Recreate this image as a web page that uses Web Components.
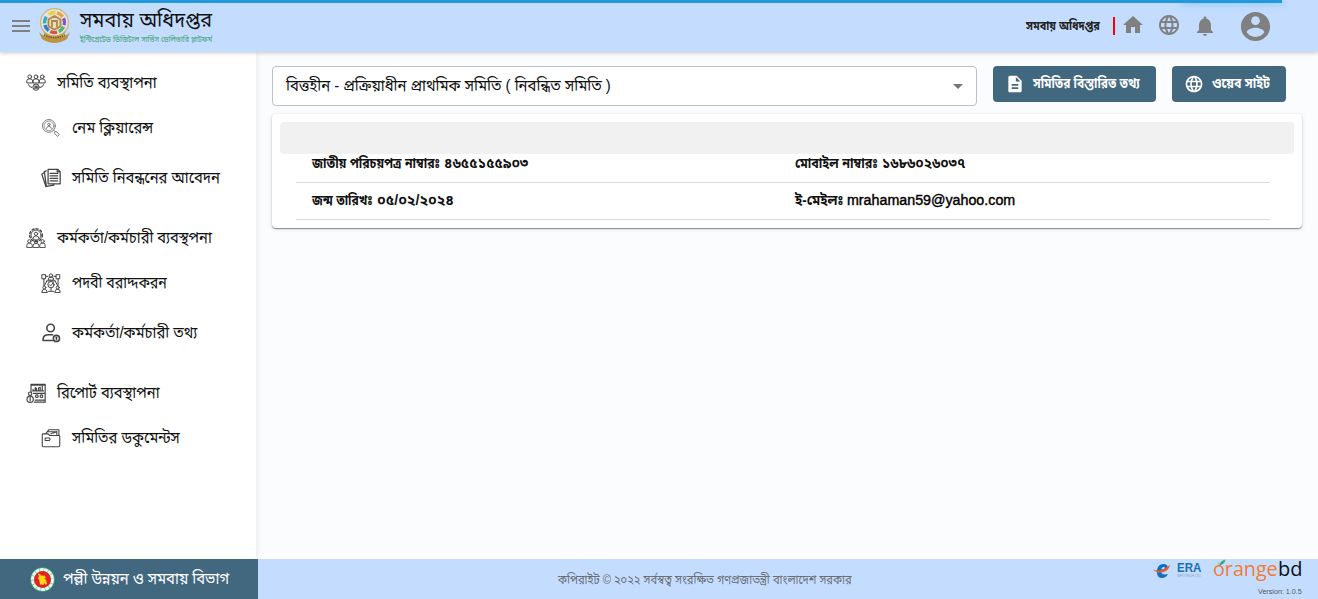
<!DOCTYPE html>
<html lang="bn">
<head>
<meta charset="utf-8">
<title>সমবায় অধিদপ্তর</title>
<style>
body{margin:0;font-family:"Liberation Sans","Noto Sans Bengali","Noto Sans",sans-serif}
</style>
</head>
<body>
<app-shell></app-shell>
<script>
const define = (name, html, init) => customElements.define(name, class extends HTMLElement {
  connectedCallback() {
    if (this.shadowRoot) return;
    const t = document.createElement('template');
    t.innerHTML = html;
    this.attachShadow({mode: 'open'}).append(t.content.cloneNode(true));
    if (init) init.call(this, this.shadowRoot);
  }
});

/* One line of text, scaled horizontally to the width it is given. */
define('fit-text', `<style>
  :host{display:block;white-space:nowrap;flex:none}
  span{display:inline-block;transform-origin:0 50%}
</style><span><slot></slot></span>`, function (root) {
  const span = root.querySelector('span');
  const w = +this.getAttribute('w');
  this.style.fontSize = (this.getAttribute('size') || 16) + 'px';
  this.style.width = w + 'px';
  const natural = span.offsetWidth;
  if (natural) span.style.transform = 'scaleX(' + w / natural + ')';
});

const S = 'fill="none" stroke="currentColor" stroke-linecap="round" stroke-linejoin="round"';
const ICONS = {
  home: '<path fill="currentColor" d="M10 20v-6h4v6h5v-8h3L12 3 2 12h3v8z"/>',
  globe: '<path fill="currentColor" d="M11.99 2C6.47 2 2 6.48 2 12s4.47 10 9.99 10C17.52 22 22 17.52 22 12S17.52 2 11.99 2zm6.93 6h-2.95c-.32-1.25-.78-2.45-1.38-3.56 1.84.63 3.37 1.91 4.33 3.56zM12 4.04c.83 1.2 1.48 2.53 1.91 3.96h-3.82c.43-1.43 1.08-2.76 1.91-3.96zM4.26 14C4.1 13.36 4 12.69 4 12s.1-1.36.26-2h3.38c-.08.66-.14 1.32-.14 2s.06 1.34.14 2H4.26zm.82 2h2.95c.32 1.25.78 2.45 1.38 3.56-1.84-.63-3.37-1.9-4.33-3.56zm2.95-8H5.08c.96-1.66 2.49-2.93 4.33-3.56C8.81 5.55 8.35 6.75 8.03 8zM12 19.96c-.83-1.2-1.48-2.53-1.91-3.96h3.82c-.43 1.43-1.08 2.76-1.91 3.96zM14.34 14H9.66c-.09-.66-.16-1.32-.16-2s.07-1.35.16-2h4.68c.09.65.16 1.32.16 2s-.07 1.34-.16 2zm.25 5.56c.6-1.11 1.06-2.31 1.38-3.56h2.95c-.96 1.65-2.49 2.93-4.33 3.56zM16.36 14c.08-.66.14-1.32.14-2s-.06-1.34-.14-2h3.38c.16.64.26 1.31.26 2s-.1 1.36-.26 2h-3.38z"/>',
  bell: '<path fill="currentColor" d="M12 22c1.1 0 2-.9 2-2h-4c0 1.1.89 2 2 2zm6-6v-5c0-3.07-1.64-5.64-4.5-6.32V4c0-.83-.67-1.5-1.5-1.5s-1.5.67-1.5 1.5v.68C7.63 5.36 6 7.92 6 11v5l-2 2v1h16v-1l-2-2z"/>',
  account: '<path fill="currentColor" d="M12 2C6.48 2 2 6.48 2 12s4.48 10 10 10 10-4.48 10-10S17.52 2 12 2zm0 3c1.66 0 3 1.34 3 3s-1.34 3-3 3-3-1.34-3-3 1.34-3 3-3zm0 14.2c-2.5 0-4.71-1.28-6-3.22.03-1.99 4-3.08 6-3.08 1.99 0 5.97 1.09 6 3.08-1.29 1.94-3.5 3.22-6 3.22z"/>',
  doc: '<path fill="currentColor" d="M14 2H6c-1.1 0-1.99.9-1.99 2L4 20c0 1.1.89 2 1.99 2H18c1.1 0 2-.9 2-2V8l-6-6zm2 16H8v-2h8v2zm0-4H8v-2h8v2zm-3-5V3.500L18.500 9H13z"/>',
  caret: '<path fill="currentColor" d="M7 10l5 5 5-5z"/>',
  menu: '<path fill="currentColor" d="M3 18h18v-2H3v2zm0-5h18v-2H3v2zm0-7v2h18V6H3z"/>',
  team: `<g ${S} stroke-width="1.200"><circle cx="4.500" cy="4.500" r="2.200"/><circle cx="12" cy="4.500" r="2.200"/><circle cx="19.500" cy="4.500" r="2.200"/><path d="M1 11.500V9.500q0-2.500 3.500-2.500T8 9.500v2zM8.500 11.500v-2q0-2.500 3.500-2.500t3.500 2.500v2zM16 11.500v-2q0-2.500 3.500-2.500T23 9.500v2zM3 14q.5 3 4 3.500M21 14q-.5 3-4 3.500"/><circle cx="12" cy="17" r="3.800"/><circle cx="12" cy="17" r="1.500"/><path d="M9.500 15l5 4M14.500 15l-5 4" stroke-width=".8"/></g>`,
  search: `<g ${S} stroke-width="1.200"><circle cx="9.500" cy="9.500" r="7.700"/><circle cx="9.500" cy="9.500" r="5.800" stroke-width=".9"/><circle cx="9.500" cy="7.800" r="1.500"/><path d="M6.500 12.500q.5-2.500 3-2.500t3 2.500M15 14.500l1.500 1.500M16 17.500l2-1.700 4 4.200-1.800 1.800z"/></g>`,
  papers: `<g ${S} stroke-width="1.500"><path d="M8.500 1.500h11.500l3 3V19H8.500zM19.500 1.500v3h3M11 6.500h9M11 9.500h9M11 12.500h9M11 15.500h9M6.500 3.500l-2.500.8L6.500 22l9-1.500M4 5.500L1 7.500l5 15"/></g>`,
  gearteam: `<g ${S} stroke-width="1.100"><circle cx="12" cy="8.500" r="6"/><circle cx="12" cy="8.500" r="7.600" stroke-width="1.700" stroke-dasharray="2.500 2.500"/><circle cx="12" cy="7" r="2"/><path d="M8.500 12.500q0-3 3.500-3t3.500 3"/><circle cx="4" cy="16" r="2"/><circle cx="12" cy="16.500" r="2"/><circle cx="20" cy="16" r="2"/><path d="M1 23v-2.500q0-2.500 3-2.500t3.500 2.500V23zM8.500 23v-2q0-2.500 3.500-2.500t3.500 2.500v2zM16.500 23v-2.500q.500-2.500 3.500-2.500t3 2.500V23z"/></g>`,
  assign: `<g ${S} stroke-width="1.200"><circle cx="12" cy="3" r="2"/><path d="M8.500 8q0-3 3.500-3t3.500 3zM1.500 2h4v5h-4zM18.500 2h4v5h-4zM6 4h2.500M15.500 4H18M3.500 7v8M20.500 7v8M7 9.500h10M7 9.500l-3 6M17 9.500l3 6"/><circle cx="12" cy="14" r="3.800"/><path d="M10 14l1.500 1.500L14.500 12"/><circle cx="4" cy="17.500" r="1.800"/><circle cx="20" cy="17.500" r="1.800"/><path d="M1 23q0-3.500 3-3.500T7.500 23zM16.500 23q0-3.500 3.500-3.500t3 3.500zM12 18v3M9 22h6"/></g>`,
  person: `<g ${S} stroke-width="1.900"><circle cx="11.500" cy="6" r="4.500"/><path d="M13.500 21H2.500v-1q0-6 6.500-6h5"/><circle cx="18.500" cy="18.500" r="3.700"/><path d="M18.500 17v3"/></g>`,
  report: `<g ${S} stroke-width="1.400"><path d="M6 11V1.500h17V23H10M7 2.500h15M8.500 9V7.500M11 9V5.500l1.500 1V9M15 9V6l2-1v4M19.500 9V4M8 9.500h13M9 12.500h13M11 20.500h11"/><circle cx="13" cy="15.800" r="1.600"/><circle cx="18.500" cy="15.800" r="1.600"/><circle cx="5" cy="12.800" r="2"/><circle cx="5" cy="19.500" r="3.800"/><path d="M5 17.500v4"/></g>`,
  folder: `<g ${S} stroke-width="1.300"><path d="M1.500 21V8q0-1 1-1h6l2 2h11q1 0 1 1v11q0 1.500-1.500 1.500h-18q-1.500 0-1.500-1.500zM6 6.500L9.500 2h12v7M9 4.500h10M12 7l7-2.500M19 4v4M5 12h5l1 1.500L10 15H5z"/></g>`
};
define('ui-icon', '<style>:host{display:block;flex:none}svg{display:block;width:100%;height:100%}</style><svg viewBox="0 0 24 24"></svg>', function (root) {
  const s = this.getAttribute('size') || 24;
  this.style.width = this.style.height = s + 'px';
  root.querySelector('svg').innerHTML = ICONS[this.getAttribute('name')];
});

define('coop-emblem', `<style>:host{display:block;flex:none;width:32px;height:36px}svg{display:block}</style>
<svg width="32" height="36" viewBox="0 0 32 36">
  <circle cx="15.500" cy="14.500" r="14" fill="#dfe4e6" stroke="#cdb780" stroke-width="1.300"/>
  <g fill="none" stroke-width="3.400" stroke-dasharray="7 55.830">
    <circle cx="15.500" cy="14.500" r="10" stroke="#f0a02e" transform="rotate(-75 15.500 14.500)"/>
    <circle cx="15.500" cy="14.500" r="10" stroke="#e8cf3e" transform="rotate(-125 15.500 14.500)"/>
    <circle cx="15.500" cy="14.500" r="10" stroke="#35a9c4" transform="rotate(175 15.500 14.500)"/>
    <circle cx="15.500" cy="14.500" r="10" stroke="#2d80cf" transform="rotate(125 15.500 14.500)"/>
    <circle cx="15.500" cy="14.500" r="10" stroke="#e0503f" transform="rotate(75 15.500 14.500)"/>
    <circle cx="15.500" cy="14.500" r="10" stroke="#55b56d" transform="rotate(25 15.500 14.500)"/>
    <circle cx="15.500" cy="14.500" r="10" stroke="#8c4fc0" transform="rotate(-25 15.500 14.500)"/>
  </g>
  <circle cx="15.500" cy="14.500" r="8" fill="#e5dccb"/>
  <path d="M9.500 11.500l6-3.500 6 3.500v7l-6 3-6-3zM13 19v-6h5v6" fill="none" stroke="#ad8744" stroke-width="1.800"/>
  <path d="M0 24q4 4.500 8.500 4.500h14Q27 28.500 31 24l-3 7q-12.500 8-25 0z" fill="#bd943e"/>
  <path d="M4 22.500q11.500 10 23 0l-2 4.500q-9.500 6-19 0z" fill="#c9a24c"/>
  <path d="M5 27q10.500 5 21 0" fill="none" stroke="#6d5426" stroke-width="1.500" stroke-dasharray="1.500 .8"/>
</svg>`);

define('gov-seal', `<style>:host{display:block;flex:none;width:25px;height:25px}svg{display:block}</style>
<svg width="25" height="25" viewBox="0 0 25 25">
  <circle cx="12.500" cy="12.500" r="12.200" fill="#3fa878"/><circle cx="12.500" cy="12.500" r="10" fill="none" stroke="#eef6ef" stroke-width="3" stroke-dasharray="4 .4"/>
  <circle cx="12.500" cy="12.500" r="8.300" fill="#ee1c25"/>
  <path d="M8 6.500l2 .5 1 1.500 4 .2.800 1.800-1.500 1.500 1.800.5.900 4.500-1.500 1-1-2-1 1.800-3.500-.3L9.300 13 8 11.500l.8-2z" fill="#fbd916"/>
</svg>`);

define('loading-bar', `<style>:host{display:block;width:1282px;height:3px;background:#2299dd;position:absolute;left:0;top:0;z-index:3}i{position:absolute;right:0;top:0;width:100px;height:3px;box-shadow:0 0 10px #29d,0 0 5px #29d;opacity:.35}</style><i></i>`);

define('app-header', `<style>
  :host{display:flex;height:52px;background:#c4ddff;align-items:center;box-shadow:0 1px 4px rgba(0,0,0,.22);position:relative;z-index:2;box-sizing:border-box;padding:0 45px 0 9px;color:#808080}
  .menu{margin-right:6px}
  .brand{display:flex;flex-direction:column;margin-left:9px;height:36px;flex:1}
  .name{color:#111;line-height:24px;height:26px}
  .sub{color:#3d9d70;line-height:12px;height:12px}
  .office{color:#222;font-weight:700;line-height:20px;margin-right:13px}
  .rule{width:2px;height:18px;background:red;margin-right:6px}
  .i{margin:-2px 12px 0 0}
  .acc{margin-left:9px}
</style>
<loading-bar></loading-bar>
<ui-icon class="menu" name="menu"></ui-icon><coop-emblem></coop-emblem>
<div class="brand"><fit-text class="name" size="21" w="132">সমবায় অধিদপ্তর</fit-text><fit-text class="sub" size="8" w="132">ইন্টিগ্রেটেড ডিজিটাল সার্ভিস ডেলিভারি প্লাটফর্ম</fit-text></div>
<fit-text class="office" size="12" w="74">সমবায় অধিদপ্তর</fit-text><div class="rule"></div>
<ui-icon class="i" name="home"></ui-icon><ui-icon class="i" name="globe"></ui-icon><ui-icon class="i" name="bell" style="margin-top:0"></ui-icon><ui-icon class="acc" name="account" size="35"></ui-icon>`);

define('nav-group', `<style>:host{display:block;margin-bottom:15px}</style><slot></slot>`);
define('nav-row', `<style>
  :host{display:flex;align-items:center;height:50px;padding-left:41px;color:#444}
  :host([top]){height:40px;padding-left:26px}
  .t{margin:2px 0 0 11px;line-height:24px;color:#111}
  .ic{margin-top:2px}
</style><div id="row" style="display:contents"></div>`, function (root) {
  root.getElementById('row').innerHTML =
    `<ui-icon class="ic" size="20" name="${this.getAttribute('icon')}"></ui-icon><fit-text class="t" size="16" w="${this.getAttribute('w')}">${this.getAttribute('label')}</fit-text>`;
  if (this.hasAttribute('dim')) root.querySelector('.ic').style.opacity = .7;
});

define('side-nav', `<style>:host{display:block;box-sizing:border-box;width:256px;height:507px;padding-top:10px;background:#fff;box-shadow:1px 0 6px rgba(0,0,0,.08)}</style>
<nav-group><nav-row top icon="team" w="100" label="সমিতি ব্যবস্থাপনা"></nav-row><nav-row dim icon="search" w="81" label="নেম ক্লিয়ারেন্স"></nav-row><nav-row icon="papers" w="148" label="সমিতি নিবন্ধনের আবেদন"></nav-row></nav-group>
<nav-group><nav-row top icon="gearteam" w="155" label="কর্মকর্তা/কর্মচারী ব্যবস্থপনা"></nav-row><nav-row icon="assign" w="95" label="পদবী বরাদ্দকরন"></nav-row><nav-row icon="person" w="125" label="কর্মকর্তা/কর্মচারী তথ্য"></nav-row></nav-group>
<nav-group><nav-row top icon="report" w="103" label="রিপোর্ট ব্যবস্থাপনা"></nav-row><nav-row icon="folder" w="108" label="সমিতির ডকুমেন্টস"></nav-row></nav-group>`);

define('select-field', `<style>:host{display:flex;box-sizing:border-box;width:705px;height:40px;border:1px solid #bfc0c2;border-radius:4px;background:#fff;align-items:center;justify-content:space-between;padding:0 6px 0 13px;color:#757575}
.t{color:#111;line-height:24px}</style>
<fit-text class="t" size="16" w="325">বিত্তহীন - প্রক্রিয়াধীন প্রাথমিক সমিতি ( নিবন্ধিত সমিতি )</fit-text><ui-icon name="caret"></ui-icon>`);

define('action-button', `<style>:host{display:flex;box-sizing:border-box;height:36px;border-radius:4px;background:#42687f;color:#fff;align-items:center;padding-left:12px;font-weight:700}
::slotted(fit-text){line-height:22px;margin:-3px 0 0 8px}</style><slot></slot>`);

define('info-cell', `<style>:host{display:flex;gap:4px;box-sizing:border-box;height:37px;border-bottom:1px solid #dcdcdc;padding:7px 0 0 16px;font-weight:700;color:#111;line-height:20px}</style><slot></slot>`);

define('info-card', `<style>
  :host{display:block;box-sizing:border-box;width:1030px;height:114px;background:#fff;border-radius:4px;padding:8px;box-shadow:0 1px 1px rgba(0,0,0,.4),0 1px 4px rgba(0,0,0,.14)}
  .band{height:32px;background:#f1f1f1;border-radius:4px}
  .grid{display:grid;grid-template-columns:483px 491px;margin:-8px 0 0 16px}
  .mail{font-weight:400;color:#000;-webkit-text-stroke:.4px #000}
</style>
<div class="band"></div><div class="grid">
<info-cell><fit-text size="14" w="128">জাতীয় পরিচয়পত্র নাম্বারঃ</fit-text><fit-text size="14" w="84">৪৬৫৫১৫৫৯০৩</fit-text></info-cell>
<info-cell><fit-text size="14" w="83">মোবাইল নাম্বারঃ</fit-text><fit-text size="14" w="83">১৬৮৬০২৬০৩৭</fit-text></info-cell>
<info-cell><fit-text size="14" w="61">জন্ম তারিখঃ</fit-text><fit-text size="14" w="77">০৫/০২/২০২৪</fit-text></info-cell>
<info-cell><fit-text size="14" w="48">ই-মেইলঃ</fit-text><fit-text class="mail" size="14" w="168">mrahaman59@yahoo.com</fit-text></info-cell>
</div>`);

define('era-logo', `<style>:host{display:flex;align-items:center;gap:6px;height:22px}.w{display:flex;flex-direction:column}.e{color:#176fb4;font-weight:700;line-height:13px;height:12px}.s{color:#8a9cb0;line-height:5px;height:6px}svg{display:block}</style>
<svg width="18" height="17" viewBox="0 0 18 17"><path d="M4 10Q4 2 10.500 2q5 0 4 4.500Q13.500 9 8 9.500q.5 4 7 2.500-2 4-6 4-5 0-5-6z" fill="#1470bd"/><path d="M8 7.500q1-3 3-2.500t0 2z" fill="#c4ddff"/><path d="M0 7.500q5 2 9 .5 4-2 8-5-1 5-6 7Q4 12 0 7.500z" fill="#f05a28"/></svg>
<div class="w"><fit-text class="e" size="13" w="24">ERA</fit-text><fit-text class="s" size="4" w="24">INFOTECH LTD</fit-text></div>`);

define('orange-logo', `<style>:host{display:flex;height:20px;font-family:"Open Sans",sans-serif}.o{color:#f47b30;line-height:20px}.b{color:#111;line-height:20px}.leaf{position:absolute;left:4px;top:0}.x{position:relative;display:flex}</style>
<div class="x"><fit-text class="o" size="20" w="65">orange</fit-text><svg class="leaf" width="9" height="7" viewBox="0 0 10 8"><path d="M3 7Q4 2 9 1 9 5 3 7zM3 7Q2 5 1 4" fill="#37a66b" stroke="#37a66b" stroke-width=".6"/></svg></div><fit-text class="b" size="20" w="24">bd</fit-text>`);

define('app-footer', `<style>
  :host{display:flex;height:40px;background:#c4ddff}
  .dept{display:flex;box-sizing:border-box;width:258px;background:#42687f;align-items:center;padding-left:30px;gap:8px;color:#fff}
  .dept fit-text{line-height:24px}
  .copy{color:#6a6e75;line-height:20px;margin:11px 0 0 300px}
  .logos{display:flex;flex-direction:column;flex:1;align-items:flex-end;margin-right:16px}
  .row{display:flex;gap:12px;height:27px}
  .ver{line-height:10px;color:#555;margin-top:1px}
</style>
<div class="dept"><gov-seal></gov-seal><fit-text size="16" w="166">পল্লী উন্নয়ন ও সমবায় বিভাগ</fit-text></div>
<fit-text class="copy" size="13" w="294">কপিরাইট © ২০২২ সর্বস্বত্ব সংরক্ষিত গণপ্রজাতন্ত্রী বাংলাদেশ সরকার</fit-text>
<div class="logos"><div class="row"><era-logo></era-logo><orange-logo></orange-logo></div><fit-text class="ver" size="7" w="44">Version: 1.0.5</fit-text></div>`);

define('app-shell', `<style>
  :host{display:flex;flex-direction:column;width:1318px;height:599px;overflow:hidden;background:#fbfcfe}
  .mid{display:flex;flex:1;min-height:0}
  main{padding:14px 16px 0;display:flex;flex-direction:column;gap:8px}
  .bar{display:flex}
</style>
<app-header></app-header>
<div class="mid"><side-nav></side-nav><main>
<div class="bar"><select-field></select-field>
<action-button style="width:163px;margin-left:16px"><ui-icon name="doc" size="20"></ui-icon><fit-text size="14" w="107">সমিতির বিস্তারিত তথ্য</fit-text></action-button>
<action-button style="width:114px;margin-left:16px"><ui-icon name="globe" size="20"></ui-icon><fit-text size="14" w="58">ওয়েব সাইট</fit-text></action-button></div>
<info-card></info-card></main></div>
<app-footer></app-footer>`);
</script>
</body>
</html>
